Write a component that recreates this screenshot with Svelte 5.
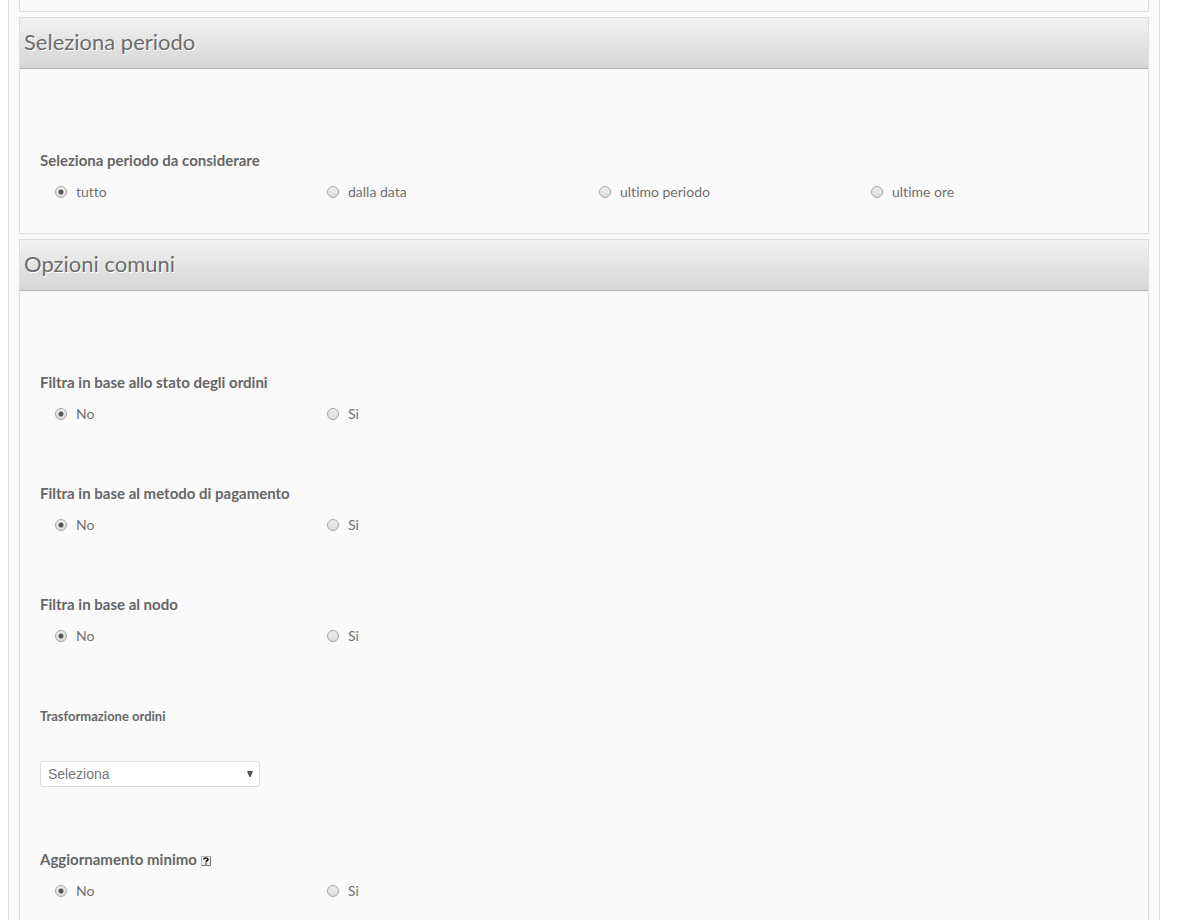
<script lang="ts">
	interface Group {
		name: string;
		label: string;
		options: string[];
		help?: boolean;
	}

	const period: Group = {
		name: 'periodo',
		label: 'Seleziona periodo da considerare',
		options: ['tutto', 'dalla data', 'ultimo periodo', 'ultime ore']
	};

	const filters: Group[] = [
		{ name: 'stato', label: 'Filtra in base allo stato degli ordini', options: ['No', 'Si'] },
		{ name: 'pagamento', label: 'Filtra in base al metodo di pagamento', options: ['No', 'Si'] },
		{ name: 'nodo', label: 'Filtra in base al nodo', options: ['No', 'Si'] }
	];

	const minimum: Group = {
		name: 'minimo',
		label: 'Aggiornamento minimo',
		options: ['No', 'Si'],
		help: true
	};
</script>

{#snippet radioGroup(group: Group)}
	<div class="group" role="radiogroup" aria-labelledby="{group.name}-label">
		<div class="label" id="{group.name}-label">
			{group.label}
			{#if group.help}
				<svg class="help" viewBox="0 0 10 10" role="img" aria-label="Aiuto">
					<rect x="0.5" y="0.5" width="9" height="9" fill="#f2f2f2" stroke="#bbb" />
					<path d="M9.5 0.5V9.5H0.5" fill="none" stroke="#777" />
					<path
						d="M2.8 3.6C2.8 1.4 7 1.4 7 3.4C7 4.7 5 4.7 5 6.3M5 7.2V8.5"
						fill="none"
						stroke="#000"
						stroke-width="1.4"
					/>
				</svg>
			{/if}
		</div>
		<div class="options">
			{#each group.options as option, i}
				<label>
					<input type="radio" name={group.name} value={option} checked={i === 0} />
					{option}
				</label>
			{/each}
		</div>
	</div>
{/snippet}

<main>
	<section class="previous"></section>

	<section>
		<h2>Seleziona periodo</h2>
		<div class="body">
			{@render radioGroup(period)}
		</div>
	</section>

	<section>
		<h2>Opzioni comuni</h2>
		<div class="body">
			{#each filters as filter}
				{@render radioGroup(filter)}
			{/each}
			<div class="group transform">
				<label class="label small" for="trasformazione">Trasformazione ordini</label>
				<div class="select">
					<select id="trasformazione">
						<option>Seleziona</option>
					</select>
					<svg viewBox="0 0 6 6" aria-hidden="true"><path d="M0 0H6L3.6 6H2.4Z" /></svg>
				</div>
			</div>
			{@render radioGroup(minimum)}
		</div>
	</section>
</main>

<style>
	:global(body) {
		margin: 0;
		background: #fff;
	}

	main {
		box-sizing: border-box;
		height: 100vh;
		overflow: hidden;
		margin: 0 22px 0 8px;
		padding: 0 10px;
		border: solid #ddd;
		border-width: 0 1px;
		background: #fafafa;
		color: #666;
		font: 14px/20px Lato, sans-serif;
		font-variant-ligatures: none;
	}

	section {
		margin-bottom: 5px;
		border: 1px solid #ddd;
	}

	.previous {
		height: 11px;
		border-top: 0;
	}

	h2 {
		margin: 0;
		padding: 0 4px 2px;
		border-bottom: 1px solid #b4b4b4;
		background: linear-gradient(#f2f2f2, #d6d6d6);
		color: #6c6c6c;
		font-size: 22px;
		font-weight: 400;
		line-height: 48px;
		text-shadow: 1px 1px 0 #fff;
	}

	.body {
		padding: 40px 20px 13px;
	}

	.group {
		padding: 41px 0 18px;
	}

	.label {
		display: block;
		margin-bottom: 12px;
		font-size: 15px;
		font-weight: 700;
	}

	.label.small {
		margin-bottom: 34px;
		font-size: 13px;
		line-height: 22px;
	}

	.help {
		width: 10px;
		height: 10px;
		vertical-align: -1px;
	}

	.options {
		display: grid;
		grid-template-columns: repeat(4, 1fr);
	}

	.options label {
		display: flex;
		align-items: center;
		gap: 9px;
		padding-left: 15px;
		color: #707070;
	}

	input {
		appearance: none;
		box-sizing: border-box;
		width: 12px;
		height: 12px;
		margin: 0;
		border: 1px solid #a5a5a5;
		border-radius: 50%;
		background: linear-gradient(#eee, #ddd);
	}

	input:checked {
		background: radial-gradient(circle, #555 0 2px, transparent 3px), linear-gradient(#eee, #ddd);
	}

	.transform {
		padding-bottom: 21px;
	}

	.select {
		position: relative;
		width: 220px;
	}

	select {
		appearance: none;
		display: block;
		box-sizing: border-box;
		width: 100%;
		height: 26px;
		padding: 0 7px;
		border: 1px solid #ddd;
		border-radius: 3px;
		background: #fff;
		color: #777;
		font: 14px 'Liberation Sans', sans-serif;
	}

	.select svg {
		position: absolute;
		top: 10px;
		right: 7px;
		width: 6px;
		height: 6px;
		fill: #555;
		pointer-events: none;
	}
</style>
